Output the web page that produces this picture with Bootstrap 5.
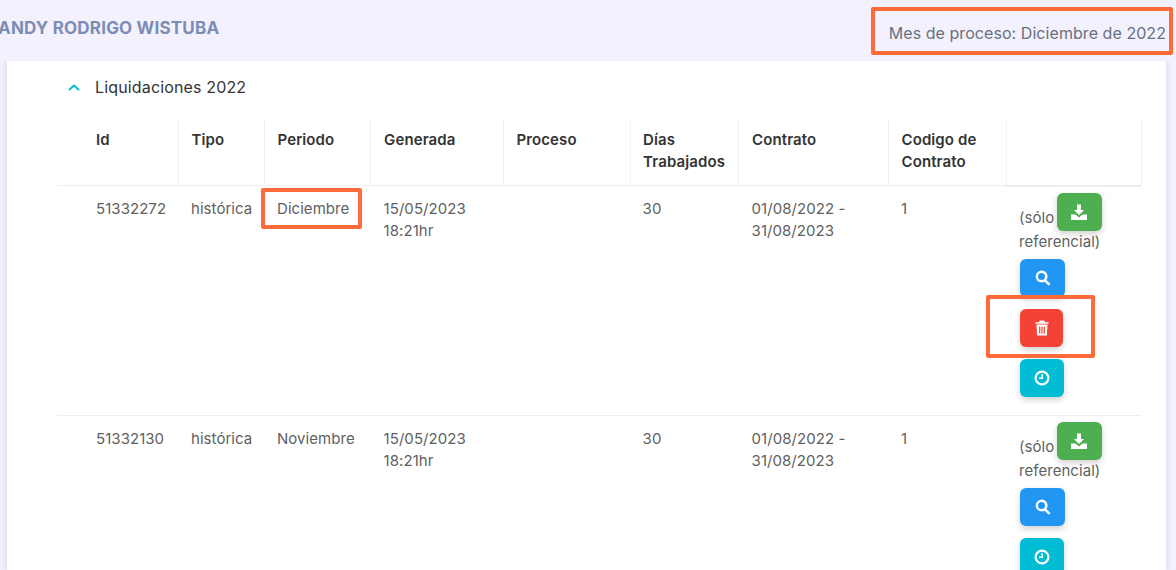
<!DOCTYPE html>
<html lang="es">
<head>
<meta charset="utf-8">
<title>Liquidaciones</title>
<link href="https://cdn.jsdelivr.net/npm/bootstrap@5.3.0/dist/css/bootstrap.min.css" rel="stylesheet">
<style>
html,body{height:570px;overflow:hidden;background:#f3f1fe;font-family:Inter,"Liberation Sans",sans-serif;font-size:15px;letter-spacing:.1px;color:#5f5f5f;}
.pagina{position:relative;height:570px;overflow:hidden;}
.cabecera{position:relative;z-index:1;background:#f3f1fe;height:61px;padding-right:10px;}
.nombre{margin:0 0 0 -2px;font-size:17px;letter-spacing:.2px;line-height:22px;font-weight:700;color:#7c8db5;position:relative;top:-3px;white-space:nowrap;}
.mes{font-size:16px;letter-spacing:.06px;line-height:22px;color:#67707f;position:relative;top:2px;}
.hoja{background:#fff;margin:0 10px 0 7px;height:509px;box-shadow:0 0 6px rgba(90,90,160,.25);padding:5px 25px 0 50px;}
.acordeon{height:42px;margin-bottom:10px;padding-left:11px;gap:15px;font-size:16px;letter-spacing:.15px;color:#333;line-height:22px;}
.tabla{table-layout:fixed;width:1084px;margin:0;border-collapse:collapse;--bs-table-color:#5f5f5f;--bs-table-bg:transparent;}
.tabla th{font-weight:600;color:#333;padding:11px 12.5px 12px 13px;line-height:22px;border:0;border-right:1px solid #f2f2f2;border-bottom:1px solid #eee;vertical-align:top;height:67px;}
.tabla td{padding:12px 12.5px 12px 13px;letter-spacing:.05px;line-height:22px;border:0;border-bottom:1px solid #eee;vertical-align:top;height:230px;}
.tabla th:nth-child(4),.tabla td:nth-child(4),.tabla th:nth-child(7),.tabla td:nth-child(7){padding-left:13.6px;}
.tabla th:nth-child(6),.tabla td:nth-child(6){padding-left:12.6px;}
.tabla .primera{padding-left:39px;}
.tabla th:last-child{border-bottom:2px solid #eee;}
.tabla td.acciones{padding:0 12px 0 13px;}
.c1{width:121px}.c2{width:86px}.c3{width:106px}.c4{width:133px}.c5{width:127px}.c6{width:108px}.c7{width:150px}.c8{width:118px}.c9{width:135px}
.accion{display:flex;align-items:center;justify-content:center;height:38px;padding:0;border:0;border-radius:6px;margin:0 0 12px 1px;color:#fff;box-shadow:0 3px 6px rgba(0,0,0,.18);}
.accion svg{width:16px;height:16px;fill:currentColor;display:block;}
.verde{display:inline-flex;width:45px;background:#4caf50;vertical-align:3px;margin:6px 0 6px -2px;}
.azul{width:45px;background:#2196f3;}
.rojo{width:43px;background:#f44336;}
.turq{width:44px;background:#00bcd4;}
.nota{display:block;margin-top:-6px;margin-bottom:6px;}
.marco{position:absolute;z-index:2;border:4px solid #ff6a3a;border-radius:2px;pointer-events:none;}
.m1{left:871px;top:7px;width:302px;height:48px;}
.m2{left:261px;top:188px;width:101px;height:41px;}
.m3{left:986px;top:295px;width:109px;height:63px;}
</style>
</head>
<body>
<div class="pagina">
  <header class="cabecera d-flex justify-content-between align-items-center">
    <h1 class="nombre">ANDY RODRIGO WISTUBA</h1>
    <div class="mes">Mes de proceso: Diciembre de 2022</div>
  </header>
  <main class="hoja">
    <div class="acordeon d-flex align-items-center">
      <svg width="12" height="7" viewBox="0 0 12 7" aria-hidden="true"><path d="M1 6l5-4.500L11 6" fill="none" stroke="#00bcd4" stroke-width="2"/></svg>
      <span>Liquidaciones 2022</span>
    </div>
    <table class="table tabla">
      <colgroup><col class="c1"><col class="c2"><col class="c3"><col class="c4"><col class="c5"><col class="c6"><col class="c7"><col class="c8"><col class="c9"></colgroup>
      <thead>
        <tr><th class="primera">Id</th><th>Tipo</th><th>Periodo</th><th>Generada</th><th>Proceso</th><th>Días Trabajados</th><th>Contrato</th><th>Codigo de Contrato</th><th></th></tr>
      </thead>
      <tbody>
        <tr>
          <td class="primera">51332272</td><td>histórica</td><td>Diciembre</td><td>15/05/2023 18:21hr</td><td></td><td>30</td><td>01/08/2022 - 31/08/2023</td><td>1</td>
          <td class="acciones">
            <div>(sólo <button class="accion verde" aria-label="Descargar"><svg viewBox="0 0 16 16"><path d="M6 .5h4v5.500h3L8 11 3 6h3zM0 10.500h4.500L8 13.500l3.500-3H16V16H0z"/></svg></button></div>
            <span class="nota">referencial)</span>
            <button class="accion azul" aria-label="Ver"><svg viewBox="0 0 16 16"><path d="M6.500.5a6 6 0 0 1 4.900 9.500l4.100 4-1.800 1.800-4-4.100A6 6 0 1 1 6.500.5zm0 2.500a3.500 3.500 0 1 0 0 7 3.500 3.500 0 0 0 0-7z"/></svg></button>
            <button class="accion rojo" aria-label="Eliminar"><svg viewBox="0 0 16 16"><path d="M5.800.5h4.400l.9 1.700H14.500v1.600h-13V2.200h3.400zM2.500 4.600h11l-.6 10.900H3.100zm2.600 2v7h1.200v-7zm2.300 0v7h1.200v-7zm2.300 0v7h1.200v-7z"/></svg></button>
            <button class="accion turq" aria-label="Historial"><svg viewBox="0 0 16 16"><path d="M8 .5a7.500 7.500 0 1 1 0 15 7.500 7.500 0 0 1 0-15zm0 2.200a5.300 5.300 0 1 0 0 10.600A5.300 5.300 0 0 0 8 2.700zM8.900 4v5H5V7.600h2.500V4z"/></svg></button>
          </td>
        </tr>
        <tr>
          <td class="primera">51332130</td><td>histórica</td><td>Noviembre</td><td>15/05/2023 18:21hr</td><td></td><td>30</td><td>01/08/2022 - 31/08/2023</td><td>1</td>
          <td class="acciones">
            <div>(sólo <button class="accion verde" aria-label="Descargar"><svg viewBox="0 0 16 16"><path d="M6 .5h4v5.500h3L8 11 3 6h3zM0 10.500h4.500L8 13.500l3.500-3H16V16H0z"/></svg></button></div>
            <span class="nota">referencial)</span>
            <button class="accion azul" aria-label="Ver"><svg viewBox="0 0 16 16"><path d="M6.500.5a6 6 0 0 1 4.900 9.500l4.100 4-1.800 1.800-4-4.100A6 6 0 1 1 6.500.5zm0 2.500a3.500 3.500 0 1 0 0 7 3.500 3.500 0 0 0 0-7z"/></svg></button>
            <button class="accion turq" aria-label="Historial"><svg viewBox="0 0 16 16"><path d="M8 .5a7.500 7.500 0 1 1 0 15 7.500 7.500 0 0 1 0-15zm0 2.200a5.300 5.300 0 1 0 0 10.600A5.300 5.300 0 0 0 8 2.700zM8.900 4v5H5V7.600h2.500V4z"/></svg></button>
          </td>
        </tr>
      </tbody>
    </table>
  </main>
  <div class="marco m1"></div>
  <div class="marco m2"></div>
  <div class="marco m3"></div>
</div>
<script src="https://cdn.jsdelivr.net/npm/bootstrap@5.3.0/dist/js/bootstrap.bundle.min.js"></script>
</body>
</html>
